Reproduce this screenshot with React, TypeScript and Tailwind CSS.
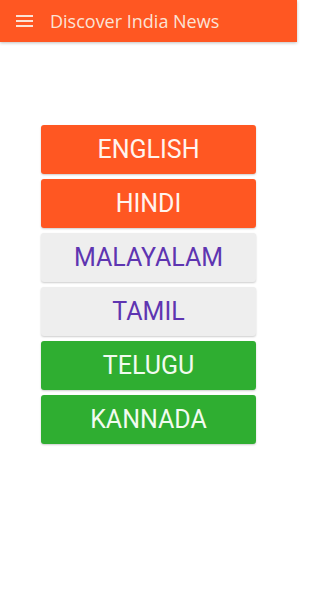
import React from "react";

const langs = [
  { name: "ENGLISH", cls: "bg-[#ff5722] text-[#fff4ee]" },
  { name: "HINDI", cls: "bg-[#ff5722] text-[#fff4ee]" },
  { name: "MALAYALAM", cls: "bg-[#eeeeee] text-[#5e35b1]" },
  { name: "TAMIL", cls: "bg-[#eeeeee] text-[#5e35b1]" },
  { name: "TELUGU", cls: "bg-[#2fae31] text-[#f1fbef]" },
  { name: "KANNADA", cls: "bg-[#2fae31] text-[#f1fbef]" },
];

export default function App() {
  return (
    <div className="w-[297px] h-[592px] bg-white flex flex-col" style={{ fontFamily: "Roboto, 'Liberation Sans', sans-serif" }}>
      <div className="h-[42px] bg-[#ff5722] flex items-center shadow-[0_1px_3px_rgba(0,0,0,0.25)]">
        <svg width="18" height="14" viewBox="0 0 18 14" className="ml-[16px]">
          <rect x="0" y="1" width="17" height="2" fill="#fbe3d6" />
          <rect x="0" y="6" width="17" height="2" fill="#fbe3d6" />
          <rect x="0" y="11" width="17" height="2" fill="#fbe3d6" />
        </svg>
        <span className="ml-[16px] text-[18px] text-[#fbe3d6] leading-none" style={{ fontFamily: "'Open Sans', 'Liberation Sans', sans-serif" }}>
          Discover India News
        </span>
      </div>
      <div className="flex flex-col gap-[5px] mt-[83px] px-[41px]">
        {langs.map((l) => (
          <div
            key={l.name}
            className={`h-[49px] rounded-[3px] flex items-center justify-center text-[25px] shadow-[0_1px_2px_rgba(0,0,0,0.2)] ${l.cls}`}
          >
            {l.name}
          </div>
        ))}
      </div>
    </div>
  );
}
